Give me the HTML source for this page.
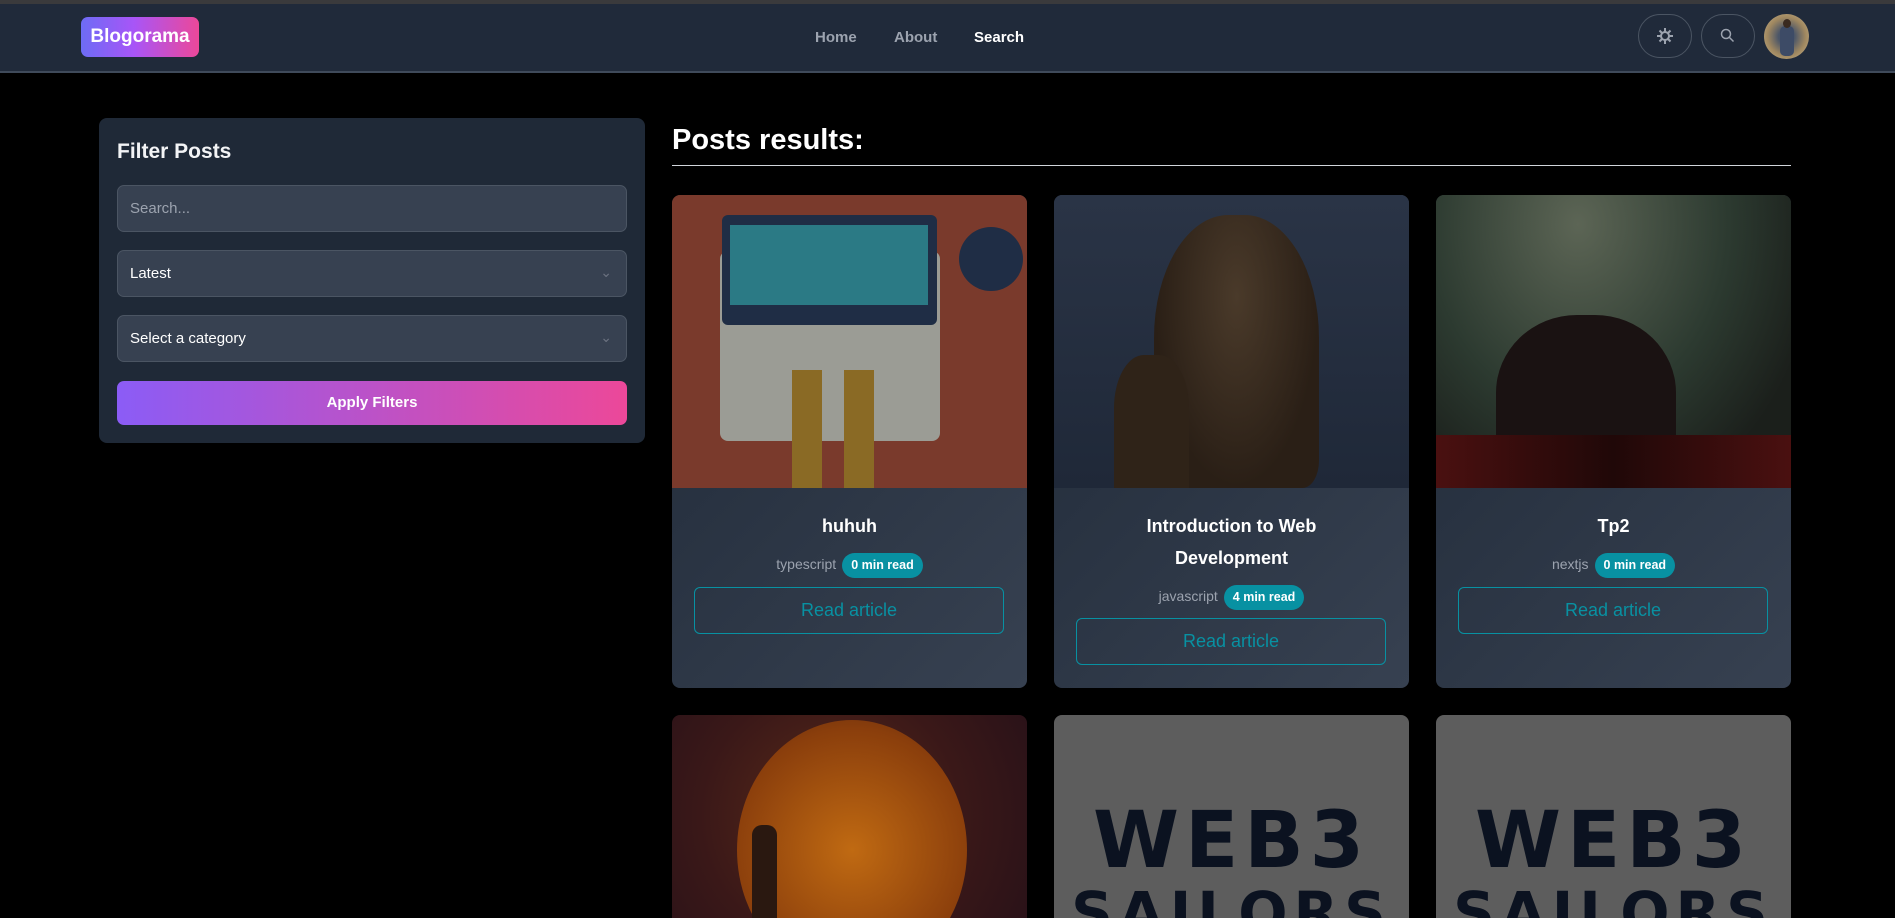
<!DOCTYPE html>
<html><head><meta charset="utf-8"><style>
*{box-sizing:border-box;margin:0;padding:0}
html{width:1895px;height:918px;overflow:hidden;background:#000}
body{width:1895px;height:918px;background:#000;font-family:"Liberation Sans",sans-serif;position:relative;overflow:hidden;color:#fff}
.a{position:absolute}
.nav{left:0;top:0;width:1895px;height:73px;background:#202a3a;border-top:4px solid #3a3a3c;border-bottom:2px solid #3f4a5a}
.logo{left:81px;top:17px;width:118px;height:40px;border-radius:7px;background:linear-gradient(90deg,#6d6cf5,#a855f7 45%,#ec4899);font-weight:bold;font-size:19px;line-height:40px;text-align:center}
.lk{top:29px;font-size:15px;font-weight:bold;color:#9ca3af}
.ib{top:14px;width:54px;height:44px;border:1px solid #4b5563;border-radius:22px}
.side{left:99px;top:118px;width:546px;height:325px;background:#1f2937;border-radius:8px}
.inp{left:117px;width:510px;height:47px;background:#374151;border:1px solid #4b5563;border-radius:7px;font-size:15px;line-height:45px;padding-left:12px}
.card{width:355px;height:493px;border-radius:8px;overflow:hidden;background:linear-gradient(135deg,#1f2937,#374151)}
.r2{height:203px;border-radius:8px 8px 0 0}
.img{left:0;top:0;width:355px;height:293px}
.t{left:0;width:355px;text-align:center;font-size:18px;font-weight:bold;line-height:32px}
.meta{left:0;width:355px;text-align:center;font-size:14px;color:#9ca3af}
.pill{display:inline-block;background:#0891a2;color:#fff;font-weight:bold;font-size:12.5px;padding:0 9px;height:25px;line-height:25px;border-radius:13px;margin-left:6px}
.btn{left:22px;width:310px;height:47px;border:1px solid #0891a2;border-radius:6px;color:#0891a2;font-size:18px;text-align:center;line-height:45px}
.w3{font-weight:900;font-size:78px;color:#0b1220;text-align:center;width:355px;left:0;letter-spacing:6px;line-height:72px;font-family:"DejaVu Sans",sans-serif}
</style></head><body>
<div class="a nav"></div>
<div class="a logo">Blogorama</div>
<div class="a lk" style="left:815px">Home</div>
<div class="a lk" style="left:894px">About</div>
<div class="a lk" style="left:974px;color:#fff">Search</div>
<div class="a ib" style="left:1638px"><svg width="52" height="42"><circle cx="26" cy="21" r="5" fill="#9ca3af"/><g stroke="#9ca3af" stroke-width="2"><path d="M26 13v16M18 21h16M20.5 15.5l11 11M31.5 15.5l-11 11"/></g><circle cx="26" cy="21" r="3" fill="#202a3a"/></svg></div>
<div class="a ib" style="left:1701px"><svg width="52" height="42"><circle cx="24" cy="19" r="4.5" fill="none" stroke="#9ca3af" stroke-width="1.5"/><path d="M27.5 22.5l4 4" stroke="#9ca3af" stroke-width="1.5"/></svg></div>
<div class="a" style="left:1764px;top:14px;width:45px;height:45px;border-radius:50%;background:radial-gradient(circle at 50% 50%,#4a5568 0 25%,#a08860 60%,#c9b58f);overflow:hidden"><div class="a" style="left:16px;top:12px;width:14px;height:30px;background:#3d4b66;border-radius:5px"></div><div class="a" style="left:19px;top:5px;width:8px;height:9px;background:#3a2a20;border-radius:50%"></div></div>

<div class="a side"></div>
<div class="a" style="left:117px;top:140px;font-size:21px;font-weight:bold;color:#f3f4f6">Filter Posts</div>
<div class="a inp" style="top:185px;color:#9ca3af">Search...</div>
<div class="a inp" style="top:250px">Latest<span class="a" style="right:14px;top:-1px;color:#6b7280;font-size:14px">&#8964;</span></div>
<div class="a inp" style="top:315px">Select a category<span class="a" style="right:14px;top:-1px;color:#6b7280;font-size:14px">&#8964;</span></div>
<div class="a" style="left:117px;top:381px;width:510px;height:44px;border-radius:7px;background:linear-gradient(90deg,#8b5cf6,#ec4899);font-weight:bold;font-size:15px;text-align:center;line-height:44px">Apply Filters</div>

<div class="a" style="left:672px;top:124px;font-size:29px;font-weight:bold">Posts results:</div>
<div class="a" style="left:672px;top:165px;width:1119px;height:1px;background:#d1d5db"></div>

<div class="a card" style="left:672px;top:195px">
 <div class="a img" style="background:#7a3a2c"></div>
 <div class="a" style="left:48px;top:56px;width:220px;height:190px;background:#9b9c95;border-radius:8px"></div>
 <div class="a" style="left:50px;top:20px;width:215px;height:110px;background:#1f2d45;border-radius:6px"></div>
 <div class="a" style="left:58px;top:30px;width:198px;height:80px;background:#2b7a85"></div>
 <div class="a" style="left:120px;top:175px;width:30px;height:118px;background:#8a6a25"></div>
 <div class="a" style="left:172px;top:175px;width:30px;height:118px;background:#8a6a25"></div>
 <div class="a" style="left:287px;top:32px;width:64px;height:64px;border-radius:50%;background:#1f2d45"></div>
 <div class="a t" style="top:315px">huhuh</div>
 <div class="a meta" style="top:358px">typescript<span class="pill">0 min read</span></div>
 <div class="a btn" style="top:392px">Read article</div>
</div>
<div class="a card" style="left:1054px;top:195px">
 <div class="a img" style="background:linear-gradient(180deg,#2a3446,#1f2838)"></div>
 <div class="a" style="left:100px;top:20px;width:165px;height:273px;background:radial-gradient(ellipse at 50% 30%,#4a3a2a,#2a1f16 70%);border-radius:45% 45% 10% 10%"></div>
 <div class="a" style="left:60px;top:160px;width:75px;height:133px;background:#2f2318;border-radius:40% 40% 0 0"></div>
 <div class="a t" style="top:315px">Introduction to Web<br>Development</div>
 <div class="a meta" style="top:390px">javascript<span class="pill">4 min read</span></div>
 <div class="a btn" style="top:423px">Read article</div>
</div>
<div class="a card" style="left:1436px;top:195px">
 <div class="a img" style="background:radial-gradient(ellipse at 40% 10%,#5c6555,#2c3a30 50%,#1b1f1b 80%)"></div>
 <div class="a" style="left:60px;top:120px;width:180px;height:173px;background:#1a1212;border-radius:45% 45% 0 0"></div>
 <div class="a" style="left:0;top:240px;width:355px;height:53px;background:linear-gradient(90deg,#4a1010,#200808 50%,#4a1010)"></div>
 <div class="a t" style="top:315px">Tp2</div>
 <div class="a meta" style="top:358px">nextjs<span class="pill">0 min read</span></div>
 <div class="a btn" style="top:392px">Read article</div>
</div>
<div class="a card r2" style="left:672px;top:715px;background:radial-gradient(circle at 45% 50%,#5a2a18,#3a1818 60%,#2a1218)">
 <div class="a" style="left:65px;top:5px;width:230px;height:260px;border-radius:50%;background:radial-gradient(circle,#c06a12,#8a3e0c 70%,#5a2810)"></div>
 <div class="a" style="left:80px;top:110px;width:25px;height:100px;background:#2a1810;border-radius:10px 10px 0 0"></div>
</div>
<div class="a card r2" style="left:1054px;top:715px;background:#5d5d5d">
 <div class="a w3" style="top:90px">WEB3</div><div class="a w3" style="top:162px;font-size:58px;height:41px;overflow:hidden">SAILORS</div>
</div>
<div class="a card r2" style="left:1436px;top:715px;background:#5d5d5d">
 <div class="a w3" style="top:90px">WEB3</div><div class="a w3" style="top:162px;font-size:58px;height:41px;overflow:hidden">SAILORS</div>
</div>
</body></html>
